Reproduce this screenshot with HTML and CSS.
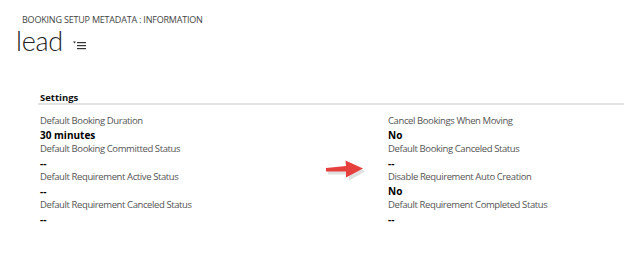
FILE: index.html
```html
<html lang="en">
<head>
    <meta charset="UTF-8">
    <title>Booking Setup Metadata</title>
    <link rel="stylesheet" href="styles.css">
</head>
<body>
    <div class="page">
        <div class="entity">BOOKING SETUP METADATA : INFORMATION</div>
        <div class="title-row">
            <span class="title">lead</span>
            <svg class="form-icon" width="14" height="9" viewBox="0 0 14 9">
                <path d="M0 0.5 L3 0.5 L1.5 2.5 Z" fill="#333"/>
                <rect x="4" y="1" width="9" height="1.2" fill="#333"/>
                <rect x="4" y="4" width="9" height="1.2" fill="#333"/>
                <rect x="4" y="7" width="9" height="1.2" fill="#333"/>
            </svg>
        </div>

        <div class="section">
            <div class="section-head">Settings</div>
            <div class="cols">
                <div class="col">
                    <div class="lbl">Default Booking Duration</div>
                    <div class="val">30 minutes</div>
                    <div class="lbl">Default Booking Committed Status</div>
                    <div class="val">--</div>
                    <div class="lbl">Default Requirement Active Status</div>
                    <div class="val">--</div>
                    <div class="lbl">Default Requirement Canceled Status</div>
                    <div class="val">--</div>
                </div>
                <div class="col right">
                    <div class="lbl">Cancel Bookings When Moving</div>
                    <div class="val">No</div>
                    <div class="lbl">Default Booking Canceled Status</div>
                    <div class="val">--</div>
                    <div class="lbl marked">
                        Disable Requirement Auto Creation
                        <svg class="arrow" width="42" height="20" viewBox="0 0 42 20">
                            <path d="M2 9.5 L23 7.5 L22 1.5 L39 10 L23 19 L23 13 L2 13 Z" fill="#000" opacity="0.12" transform="translate(1,1.5)"/>
                            <path d="M1 8 L21 6 L20.5 0.5 L38 8.5 L21 17.5 L21 11.5 L1 11.5 Z" fill="#e5403e"/>
                        </svg>
                    </div>
                    <div class="val">No</div>
                    <div class="lbl">Default Requirement Completed Status</div>
                    <div class="val">--</div>
                </div>
            </div>
        </div>
    </div>
</body>
</html>
```

FILE: styles.css
```css
body {
  margin: 0;
  background-color: #ffffff;
  font-family: "Open Sans", "Noto Sans", sans-serif;
  color: #000;
}

.page {
  padding: 13px 0 0 16px;
}

.entity {
  margin-left: 6px;
  font-size: 9px;
  letter-spacing: -0.2px;
  color: #444;
  line-height: 13px;
}

.title-row {
  display: flex;
  align-items: center;
  height: 30px;
}

.title {
  font-family: "Lato", sans-serif;
  font-size: 27px;
  font-weight: 300;
  color: #222;
  line-height: 30px;
  letter-spacing: -0.3px;
}

.form-icon {
  margin: 8px 0 0 10px;
}

.section {
  margin: 36px 0 0 22px;
}

.section-head {
  font-size: 9.5px;
  font-weight: 700;
  color: #111;
  padding: 0 0 0 2px;
  line-height: 11px;
  border-bottom: 2px solid #e2e2e2;
}

.cols {
  display: grid;
  grid-template-columns: 348px 1fr;
  padding: 9px 0 0 2px;
}

.lbl {
  font-size: 9.5px;
  letter-spacing: -0.4px;
  color: #555;
  line-height: 14px;
}

.val {
  font-size: 10px;
  font-weight: 700;
  color: #000;
  line-height: 14px;
}

.marked {
  position: relative;
}

.arrow {
  position: absolute;
  left: -63px;
  top: -10px;
}
```
